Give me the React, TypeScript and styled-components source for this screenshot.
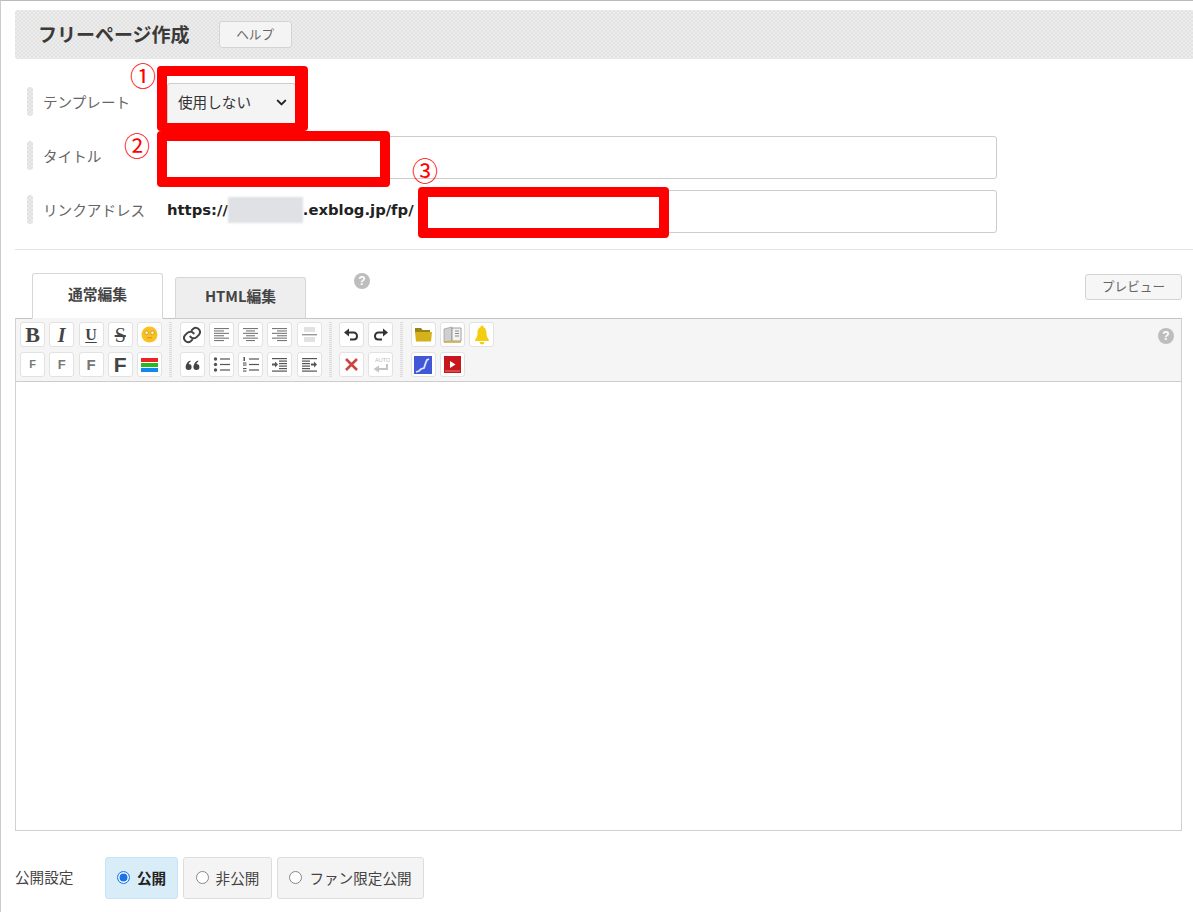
import { ReactNode } from "react"
import styled, { createGlobalStyle } from "styled-components"
import { ChevronDown } from "lucide-react"

const GlobalStyle = createGlobalStyle`
    html, body {
        margin: 0;
        padding: 0;
        background: #fff;
    }
    body {
        font-family: "Noto Sans CJK JP", "Noto Sans", sans-serif;
        color: #333;
    }
`

// align and list icons are just rows of short strokes
const Lines = ({ rows }: { rows: [number, number][] }) => (
    <svg width="17" height="17" viewBox="0 0 17 17">
        {rows.map(([x1, x2], i) => (
            <rect key={i} x={x1} y={2 + i * 2.4} width={x2 - x1} height="1.1" fill="#777" />
        ))}
    </svg>
)

const alignLeft: [number, number][] = [[1, 16], [1, 11], [1, 16], [1, 11], [1, 16], [1, 11]]
const alignCenter: [number, number][] = [[1, 16], [4, 13], [1, 16], [4, 13], [1, 16], [4, 13]]
const alignRight: [number, number][] = [[1, 16], [6, 16], [1, 16], [6, 16], [1, 16], [6, 16]]

const LinkIcon = () => (
    <svg width="20" height="20" viewBox="0 0 24 24" fill="none" stroke="#444" strokeWidth="2.4" strokeLinecap="round">
        <path d="M10 14a5 5 0 0 0 7.5.5l3-3a5 5 0 0 0-7-7l-1.7 1.7" />
        <path d="M14 10a5 5 0 0 0-7.5-.5l-3 3a5 5 0 0 0 7 7l1.7-1.7" />
    </svg>
)

const Smiley = () => (
    <svg width="17" height="17" viewBox="0 0 17 17">
        <circle cx="8.5" cy="8.5" r="8" fill="#fcc01e" />
        <circle cx="5.6" cy="6.8" r="1.8" fill="#fff3c4" stroke="#a8842a" strokeWidth=".6" />
        <circle cx="11.4" cy="6.8" r="1.8" fill="#fff3c4" stroke="#a8842a" strokeWidth=".6" />
        <path d="M6 11.8h5" stroke="#c4932a" strokeWidth="1" />
    </svg>
)

const ColorBars = () => (
    <svg width="17" height="14" viewBox="0 0 17 14">
        <rect y="0" width="17" height="4" fill="#ee2222" />
        <rect y="5" width="17" height="4" fill="#22bb22" />
        <rect y="10" width="17" height="4" fill="#1188ee" />
    </svg>
)

const HrIcon = () => (
    <svg width="17" height="17" viewBox="0 0 17 17">
        <rect x="3" y="1" width="11" height="5" fill="#e2e2e2" />
        <rect x="1" y="8" width="15" height="1.4" fill="#999" />
        <rect x="3" y="11" width="11" height="5" fill="#e2e2e2" />
    </svg>
)

const QuoteIcon = () => (
    <svg width="17" height="17" viewBox="0 0 17 17" fill="#444">
        <circle cx="4.6" cy="11" r="3" />
        <circle cx="12.4" cy="11" r="3" />
        <path d="M2 10.5C2 7 4 5 6.4 4.4L6.6 5.6C5 6.4 4.4 8 4.6 10zM9.8 10.5c0-3.5 2-5.5 4.4-6.1l.2 1.2c-1.6.8-2.2 2.4-2 4.4z" />
    </svg>
)

const BulletList = () => (
    <svg width="17" height="17" viewBox="0 0 17 17" fill="#555">
        <circle cx="2.5" cy="3" r="1.7" />
        <circle cx="2.5" cy="8.5" r="1.7" />
        <circle cx="2.5" cy="14" r="1.7" />
        <rect x="7" y="2.4" width="10" height="1.2" />
        <rect x="7" y="7.9" width="10" height="1.2" />
        <rect x="7" y="13.4" width="10" height="1.2" />
    </svg>
)

const NumberList = () => (
    <svg width="17" height="17" viewBox="0 0 17 17" fill="#555">
        <rect x="1.5" y="1" width="1.5" height="4" />
        <rect x="1" y="6.5" width="3.5" height="1.1" />
        <rect x="1" y="8.5" width="3.5" height="1.1" />
        <rect x="1" y="12" width="3.5" height="1.1" />
        <rect x="1" y="14.5" width="3.5" height="1.1" />
        <rect x="7" y="2.4" width="10" height="1.2" />
        <rect x="7" y="7.9" width="10" height="1.2" />
        <rect x="7" y="13.4" width="10" height="1.2" />
    </svg>
)

const IndentIcon = ({ right }: { right?: boolean }) => (
    <svg width="17" height="17" viewBox="0 0 17 17" fill="#555">
        <rect x="1" y="2" width="15" height="1.2" />
        <rect x={right ? 1 : 8} y="4.5" width="8" height="1.2" />
        <rect x={right ? 1 : 8} y="7" width="8" height="1.2" />
        <rect x={right ? 1 : 8} y="9.5" width="8" height="1.2" />
        <rect x={right ? 1 : 8} y="12" width="8" height="1.2" />
        <rect x="1" y="14.5" width="15" height="1.2" />
        {right ? <path d="M10 7.5h3V5.5l3 3-3 3V9.5h-3z" /> : <path d="M1 7.5h3V5.5l3 3-3 3V9.5H1z" />}
    </svg>
)

const UndoIcon = ({ flip }: { flip?: boolean }) => (
    <svg width="17" height="17" viewBox="0 0 17 17" fill="none" style={flip ? { transform: "scaleX(-1)" } : undefined}>
        <path d="M4.5 6.5h6a3.5 3.5 0 0 1 3.5 3.5c0 2-1.5 3.5-3.5 3.5H7" stroke="#333" strokeWidth="2" />
        <path d="M1 6.5 6 2.5v8z" fill="#333" />
    </svg>
)

const CrossIcon = () => (
    <svg width="15" height="15" viewBox="0 0 15 15">
        <path d="M2 2l11 11M13 2 2 13" stroke="#c9473f" strokeWidth="2.6" />
    </svg>
)

const AutoReturn = () => (
    <svg width="18" height="18" viewBox="0 0 18 18" fill="none">
        <text x="3" y="6" fontSize="5.5" fill="#bbb" fontFamily="Liberation Sans, sans-serif">AUTO</text>
        <path d="M15 8v5H6" stroke="#c4c4c4" strokeWidth="2" />
        <path d="M1.5 13 7 9.5v7z" fill="#c4c4c4" />
    </svg>
)

const FolderIcon = () => (
    <svg width="19" height="17" viewBox="0 0 19 17">
        <path d="M1 2h6l1.5 2H16v3H1z" fill="#9a8417" />
        <path d="M1 6h17l-1 9.5H2z" fill="#d4b21a" />
    </svg>
)

const BookIcon = () => (
    <svg width="19" height="17" viewBox="0 0 19 17">
        <path d="M1 3 9 1v14l-8 1z" fill="#cfcfcf" stroke="#999" strokeWidth=".7" />
        <path d="M9 2h9v13H9z" fill="#f2f2f2" stroke="#888" strokeWidth=".8" />
        <path d="M12 5h4M12 7.5h4M12 10h4" stroke="#888" />
        <path d="M1 16h17" stroke="#d4a72c" strokeWidth="1.4" />
    </svg>
)

const BellIcon = () => (
    <svg width="18" height="20" viewBox="0 0 18 20" fill="#f4cd0f">
        <circle cx="9" cy="2" r="1.5" />
        <path d="M9 2c3.5 0 4.5 3 4.5 6.5 0 4 2.5 5.5 2.5 7.5H2C2 14 4.5 12.5 4.5 8.5 4.5 5 5.5 2 9 2z" />
        <path d="M6.5 17h5a2.5 2.5 0 0 1-5 0z" />
    </svg>
)

const MapIcon = () => (
    <svg width="18" height="18" viewBox="0 0 18 18">
        <rect width="18" height="18" fill="#3f57d8" />
        <path d="M2 16l3-1 2-2 3-1 1-3 1-3 1-2 2-1" fill="none" stroke="#dfe5ff" strokeWidth="1.8" />
    </svg>
)

const VideoIcon = () => (
    <svg width="17" height="17" viewBox="0 0 17 17">
        <rect width="17" height="17" fill="#c8161d" />
        <rect x="1" y="14.5" width="15" height="1" fill="#e77" />
        <path d="M6 5l5.5 3.5L6 12z" fill="#fff" />
    </svg>
)

export default function App() {
    const groups = toolGroups()
    return (
        <Page>
            <GlobalStyle />
            <Header>
                <Title>フリーページ作成</Title>
                <SmallButton>ヘルプ</SmallButton>
            </Header>

            <Form>
                <Row>
                    <RowLabel>テンプレート</RowLabel>
                    <SelectWrap>
                        <TemplateSelect defaultValue="none">
                            <option value="none">使用しない</option>
                        </TemplateSelect>
                        <SelectArrow size={15} strokeWidth={3.2} />
                    </SelectWrap>
                </Row>
                <Row>
                    <RowLabel>タイトル</RowLabel>
                    <TextInput />
                </Row>
                <Row>
                    <RowLabel>リンクアドレス</RowLabel>
                    <Url>
                        https://<Blurred />.exblog.jp/fp/
                    </Url>
                    <TextInput />
                </Row>
            </Form>

            <Divider />

            <TabBar>
                <Tab $active>通常編集</Tab>
                <Tab>HTML編集</Tab>
                <HelpDot>?</HelpDot>
                <PreviewButton>プレビュー</PreviewButton>
            </TabBar>

            <Editor>
                <Toolbar>
                    {groups.map((g, i) => (
                        <ToolGroup key={i} $cols={g.top.length}>
                            {g.top.concat(g.bottom).map((t) => (
                                <ToolButton key={t.key}>{t.node}</ToolButton>
                            ))}
                        </ToolGroup>
                    ))}
                    <ToolbarHelp>?</ToolbarHelp>
                </Toolbar>
                <EditArea />
            </Editor>

            <PublishRow>
                <PublishLabel>公開設定</PublishLabel>
                <Choice $checked $width={73}>
                    <Radio $checked />公開
                </Choice>
                <Choice $width={89}>
                    <Radio />非公開
                </Choice>
                <Choice $width={147}>
                    <Radio />ファン限定公開
                </Choice>
            </PublishRow>

            <Mark $x={130} $y={61}>①</Mark>
            <Mark $x={124} $y={131}>②</Mark>
            <Mark $x={412} $y={156}>③</Mark>
            <RedBox $x={157} $y={66} $w={151} $h={65} $right={13} $bottom={8} />
            <RedBox $x={157} $y={131} $w={233} $h={56} $white />
            <RedBox $x={418} $y={187} $w={251} $h={51} $white />
        </Page>
    )
}

type ToolDef = { key: string; node: ReactNode }

function toolGroups(): { top: ToolDef[]; bottom: ToolDef[] }[] {
    return [
        {
            top: [
                { key: "bold", node: <ToolLetter $face="serif" $size={22} $bold>B</ToolLetter> },
                { key: "italic", node: <ToolLetter $face="serif" $size={20} $italic>I</ToolLetter> },
                { key: "underline", node: <ToolLetter $face="serif" $size={16} $bold $underline>U</ToolLetter> },
                { key: "strike", node: <ToolLetter $face="serif" $size={20} $strike>S</ToolLetter> },
                { key: "smiley", node: <Smiley /> },
            ],
            bottom: [
                { key: "f1", node: <ToolLetter $face="sans" $size={11} $bold>F</ToolLetter> },
                { key: "f2", node: <ToolLetter $face="sans" $size={13} $bold>F</ToolLetter> },
                { key: "f3", node: <ToolLetter $face="sans" $size={15} $bold>F</ToolLetter> },
                { key: "f4", node: <ToolLetter $face="sans" $size={21} $bold>F</ToolLetter> },
                { key: "colors", node: <ColorBars /> },
            ],
        },
        {
            top: [
                { key: "link", node: <LinkIcon /> },
                { key: "left", node: <Lines rows={alignLeft} /> },
                { key: "center", node: <Lines rows={alignCenter} /> },
                { key: "right", node: <Lines rows={alignRight} /> },
                { key: "hr", node: <HrIcon /> },
            ],
            bottom: [
                { key: "quote", node: <QuoteIcon /> },
                { key: "ul", node: <BulletList /> },
                { key: "ol", node: <NumberList /> },
                { key: "indent", node: <IndentIcon /> },
                { key: "outdent", node: <IndentIcon right /> },
            ],
        },
        {
            top: [
                { key: "undo", node: <UndoIcon /> },
                { key: "redo", node: <UndoIcon flip /> },
            ],
            bottom: [
                { key: "clear", node: <CrossIcon /> },
                { key: "auto", node: <AutoReturn /> },
            ],
        },
        {
            top: [
                { key: "folder", node: <FolderIcon /> },
                { key: "book", node: <BookIcon /> },
                { key: "bell", node: <BellIcon /> },
            ],
            bottom: [
                { key: "map", node: <MapIcon /> },
                { key: "video", node: <VideoIcon /> },
            ],
        },
    ]
}

const Page = styled.div`
    position: relative;
    width: 1193px;
    height: 912px;
    box-sizing: border-box;
    overflow: hidden;
    border-top: 1px solid #bbb;
    border-left: 1px solid #ccc;
    padding: 9px 0 0 14px;
`

const Header = styled.div`
    display: flex;
    align-items: center;
    gap: 29px;
    height: 49px;
    padding: 0 0 0 23px;
    border-radius: 3px 0 0 3px;
    background: repeating-conic-gradient(#e3e3e3 0 25%, #ececec 0 50%) 0 0 / 4px 4px;
`

const Title = styled.h1`
    margin: 0 0 2px;
    font-size: 19px;
    font-weight: 700;
    color: #3a3a3a;
`

const SmallButton = styled.button`
    width: 73px;
    height: 27px;
    padding: 0 0 2px;
    border: 1px solid #d4d4d4;
    border-radius: 3px;
    background: #f4f4f4;
    color: #666;
    font: 12.6px "Noto Sans CJK JP", sans-serif;
`

const Form = styled.div`
    display: flex;
    flex-direction: column;
    gap: 11px;
    padding: 23px 0 0 12px;
    width: 970px;
`

const Row = styled.div`
    display: flex;
    align-items: center;
    height: 43px;
`

const RowLabel = styled.div`
    display: flex;
    align-items: center;
    gap: 10px;
    flex: none;
    width: 140px;
    margin-bottom: 4px;
    font-size: 14.6px;
    color: #666;

    &::before {
        content: "";
        width: 6px;
        height: 29px;
        border-radius: 3px;
        background: repeating-conic-gradient(#e0e0e0 0 25%, #ebebeb 0 50%) 0 0 / 4px 4px;
    }
`

const SelectWrap = styled.div`
    position: relative;
    display: flex;
`

const TemplateSelect = styled.select`
    appearance: none;
    width: 129px;
    height: 42px;
    padding: 0 10px 5px;
    border: 1px solid #ccc;
    border-radius: 3px;
    background: #f4f4f4;
    color: #333;
    font: 14.6px "Noto Sans CJK JP", sans-serif;
`

const SelectArrow = styled(ChevronDown)`
    position: absolute;
    top: 12px;
    right: 7px;
    color: #222;
    pointer-events: none;
`

const TextInput = styled.input`
    flex: 1;
    min-width: 0;
    height: 43px;
    box-sizing: border-box;
    border: 1px solid #ccc;
    border-radius: 3px;
    background: #fff;
`

const Url = styled.div`
    display: flex;
    align-items: center;
    flex: none;
    width: 246px;
    margin-right: 5px;
    margin-bottom: 4px;
    font-family: "DejaVu Sans", sans-serif;
    font-size: 14.8px;
    font-weight: 700;
    color: #222;
`

const Blurred = styled.span`
    display: block;
    flex: none;
    width: 75px;
    height: 26px;
    background: #e0e1e5;
    filter: blur(1px);
`

const Divider = styled.div`
    height: 1px;
    margin-top: 16px;
    background: #e2e2e2;
`

const TabBar = styled.div`
    position: relative;
    display: flex;
    align-items: flex-end;
    gap: 12px;
    height: 69px;
    padding-left: 17px;
    margin-bottom: -1px;
`

const Tab = styled.div<{ $active?: boolean }>`
    position: relative;
    z-index: 1;
    width: 131px;
    height: ${({ $active }) => ($active ? 46 : 42)}px;
    box-sizing: border-box;
    border: 1px solid #d6d6d6;
    border-bottom: ${({ $active }) => ($active ? "1px solid #f5f5f5" : "1px solid #ccc")};
    border-radius: 3px 3px 0 0;
    background: ${({ $active }) => ($active ? "#fff" : "#eee")};
    font-size: 14.8px;
    font-weight: 700;
    line-height: ${({ $active }) => ($active ? 40 : 36)}px;
    text-align: center;
    color: #444;
`

const HelpDot = styled.span`
    align-self: flex-start;
    width: 16px;
    height: 16px;
    margin: 23px 0 0 36px;
    border-radius: 50%;
    background: #bdbdbd;
    color: #fff;
    font: 700 12px/16px "Liberation Sans", sans-serif;
    text-align: center;
`

const PreviewButton = styled.button`
    align-self: flex-start;
    width: 97px;
    height: 26px;
    margin: 24px 11px 0 auto;
    padding: 0 0 3px;
    border: 1px solid #d4d4d4;
    border-radius: 3px;
    background: #f6f6f6;
    color: #666;
    font: 12.6px "Noto Sans CJK JP", sans-serif;
`

const Editor = styled.div`
    width: 1167px;
    box-sizing: border-box;
    border: 1px solid #d0d0d0;
    border-top-color: #c4c4c4;
`

const Toolbar = styled.div`
    position: relative;
    display: flex;
    gap: 7.5px;
    height: 63px;
    box-sizing: border-box;
    padding: 3px 0 0 4px;
    background: #f5f5f5;
    border-bottom: 1px solid #ccc;
`

const ToolGroup = styled.div<{ $cols: number }>`
    display: grid;
    grid-template-columns: repeat(${({ $cols }) => $cols}, 25px);
    grid-auto-rows: 25px;
    gap: 5px 4.25px;
    height: 55px;
    padding-right: 10px;
    background: repeating-linear-gradient(#dedede 0 1px, #f0f0f0 1px 2px) right top / 3px 100% no-repeat;
    &:last-of-type {
        background: none;
    }
`

const ToolButton = styled.button`
    display: flex;
    align-items: center;
    justify-content: center;
    width: 25px;
    height: 25px;
    padding: 0;
    border: 1px solid #e2e2e2;
    border-radius: 3px;
    background: #fff;
    overflow: hidden;
`

const ToolLetter = styled.span<{
    $face: string
    $size: number
    $bold?: boolean
    $italic?: boolean
    $underline?: boolean
    $strike?: boolean
}>`
    font-family: ${({ $face }) => ($face === "serif" ? '"Liberation Serif", serif' : '"Liberation Sans", sans-serif')};
    font-size: ${({ $size }) => $size}px;
    font-weight: ${({ $bold, $italic }) => ($bold || $italic ? 700 : 400)};
    font-style: ${({ $italic }) => ($italic ? "italic" : "normal")};
    text-decoration: ${({ $underline, $strike }) => ($underline ? "underline" : $strike ? "line-through" : "none")};
    text-underline-offset: 2px;
    line-height: 1;
    color: ${({ $size }) => ($size < 16 ? "#777" : "#444")};
`

const ToolbarHelp = styled.span`
    position: absolute;
    top: 9px;
    right: 7px;
    width: 16px;
    height: 16px;
    border-radius: 50%;
    background: #bdbdbd;
    color: #fff;
    font: 700 12px/16px "Liberation Sans", sans-serif;
    text-align: center;
`

const EditArea = styled.div`
    height: 448px;
    background: #fff;
`

const PublishRow = styled.div`
    display: flex;
    align-items: center;
    gap: 5px;
    height: 42px;
    margin-top: 26px;
`

const PublishLabel = styled.div`
    width: 85px;
    margin-bottom: 4px;
    font-size: 14.6px;
    color: #444;
`

const Choice = styled.div<{ $checked?: boolean; $width: number }>`
    display: flex;
    align-items: center;
    justify-content: center;
    gap: 7px;
    width: ${({ $width }) => $width}px;
    height: 42px;
    box-sizing: border-box;
    padding-bottom: 2px;
    border: 1px solid ${({ $checked }) => ($checked ? "#c5e5f5" : "#ddd")};
    border-radius: 3px;
    background: ${({ $checked }) => ($checked ? "#d9edf8" : "#f4f4f4")};
    font-size: 14.6px;
    font-weight: ${({ $checked }) => ($checked ? 700 : 400)};
    color: ${({ $checked }) => ($checked ? "#222" : "#444")};
`

const Radio = styled.span<{ $checked?: boolean }>`
    flex: none;
    width: 13px;
    height: 13px;
    box-sizing: border-box;
    border-radius: 50%;
    border: ${({ $checked }) => ($checked ? "1.5px solid #1a73e8" : "1.5px solid #888")};
    background: #fff;
    box-shadow: ${({ $checked }) => ($checked ? "inset 0 0 0 1.5px #fff, inset 0 0 0 7px #1a73e8" : "none")};
`

const RedBox = styled.div<{
    $x: number
    $y: number
    $w: number
    $h: number
    $right?: number
    $bottom?: number
    $white?: boolean
}>`
    position: absolute;
    left: ${({ $x }) => $x - 1}px;
    top: ${({ $y }) => $y - 1}px;
    width: ${({ $w }) => $w}px;
    height: ${({ $h }) => $h}px;
    box-sizing: border-box;
    border: 10px solid #f00;
    border-right-width: ${({ $right }) => $right ?? 10}px;
    border-bottom-width: ${({ $bottom }) => $bottom ?? 10}px;
    border-radius: 4px;
    background: ${({ $white }) => ($white ? "#fff" : "transparent")};
`

const Mark = styled.span<{ $x: number; $y: number }>`
    position: absolute;
    left: ${({ $x }) => $x - 1}px;
    top: ${({ $y }) => $y - 1}px;
    font-size: 26px;
    line-height: 28px;
    color: #f00;
`
